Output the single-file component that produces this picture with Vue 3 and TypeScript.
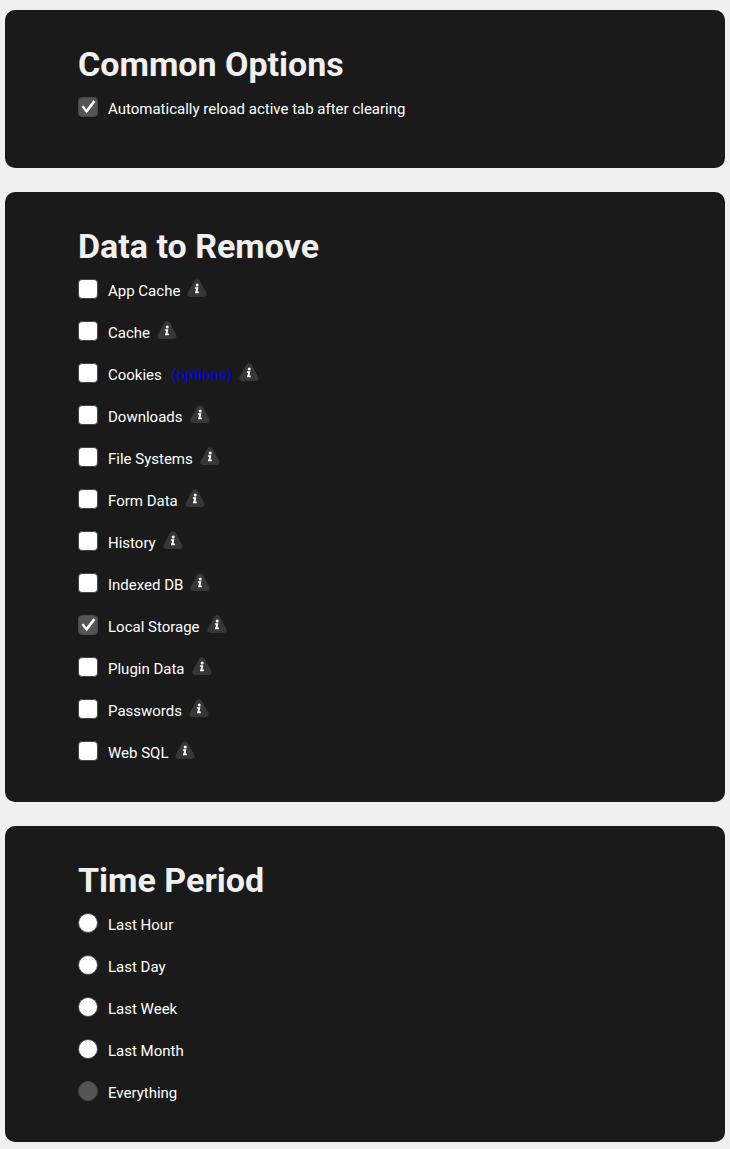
<script setup lang="ts">
import { ref } from 'vue'

interface DataType {
  id: string
  label: string
  hasOptions?: boolean
}

const dataTypes: DataType[] = [
  { id: 'appCache', label: 'App Cache' },
  { id: 'cache', label: 'Cache' },
  { id: 'cookies', label: 'Cookies', hasOptions: true },
  { id: 'downloads', label: 'Downloads' },
  { id: 'fileSystems', label: 'File Systems' },
  { id: 'formData', label: 'Form Data' },
  { id: 'history', label: 'History' },
  { id: 'indexedDB', label: 'Indexed DB' },
  { id: 'localStorage', label: 'Local Storage' },
  { id: 'pluginData', label: 'Plugin Data' },
  { id: 'passwords', label: 'Passwords' },
  { id: 'webSQL', label: 'Web SQL' },
]

const periods: string[] = ['Last Hour', 'Last Day', 'Last Week', 'Last Month', 'Everything']

const autoReload = ref(true)
const selected = ref<string[]>(['localStorage'])
const period = ref('Everything')
</script>

<template>
  <main class="page">
    <section class="card card-common">
      <h1>Common Options</h1>
      <div class="row">
        <input id="autoReload" v-model="autoReload" type="checkbox" />
        <label for="autoReload">Automatically reload active tab after clearing</label>
      </div>
    </section>

    <section class="card">
      <h1>Data to Remove</h1>
      <div v-for="item in dataTypes" :key="item.id" class="row">
        <input :id="item.id" v-model="selected" type="checkbox" :value="item.id" />
        <label :for="item.id">{{ item.label }}</label>
        <a v-if="item.hasOptions" class="options" href="#cookies">(options)</a>
        <svg class="info" viewBox="0 0 20 20" aria-hidden="true">
          <path
            d="M7.2 1.8Q10 -1.4 12.8 1.8L18.9 13.2Q20.8 17.8 16.8 17.9H3.2Q-0.8 17.8 1.1 13.2Z"
            fill="#373737"
          />
          <circle cx="10.2" cy="5.9" r="1.5" fill="#fff" />
          <path d="M7.9 8.2h3.5l-.9 4.4h1.3v1.6H8v-1.6h.6l.5-2.8H7.9z" fill="#fff" />
        </svg>
      </div>
    </section>

    <section class="card">
      <h1>Time Period</h1>
      <div v-for="(name, index) in periods" :key="name" class="row">
        <input :id="`period-${index}`" v-model="period" type="radio" name="period" :value="name" />
        <label :for="`period-${index}`">{{ name }}</label>
      </div>
    </section>
  </main>
</template>

<style>
body {
  margin: 0;
  background: #f0f0f0;
}
</style>

<style scoped>
.page {
  display: flex;
  flex-direction: column;
  gap: 24px;
  padding: 10px 5px 7px;
  font-family: Roboto, "Liberation Sans", sans-serif;
  font-size: 15px;
  color: #f0f0f0;
}

.card {
  padding: 32px 73px 30px;
  border-radius: 10px;
  background: #1a1a1a;
}

.card-common {
  padding-bottom: 40px;
}

h1 {
  margin: 0;
  font-size: 34px;
  line-height: 44px;
  font-weight: 700;
}

.row {
  display: flex;
  align-items: center;
  height: 42px;
}

input {
  appearance: none;
  box-sizing: border-box;
  flex: none;
  width: 20px;
  height: 20px;
  margin: 0 10px 0 0;
  border: 1px solid #484848;
  border-radius: 4px;
  background: #fff;
}

input[type="radio"] {
  border-radius: 50%;
}

input:checked {
  background: #555;
}

input[type="checkbox"]:checked {
  display: grid;
  place-items: center;
}

input[type="checkbox"]:checked::before {
  content: "";
  width: 16px;
  height: 16px;
  background: #fff;
  clip-path: polygon(10% 49%, 22% 40%, 39% 66%, 84% 8%, 96% 18%, 41% 91%);
}

label,
.options {
  padding-top: 3px;
  line-height: 20px;
}

label {
  color: #fff;
}

.options {
  margin-left: 10px;
  color: #0000ee;
  text-decoration: none;
}

.info {
  flex: none;
  width: 20px;
  height: 20px;
  margin-left: 7px;
}
</style>
